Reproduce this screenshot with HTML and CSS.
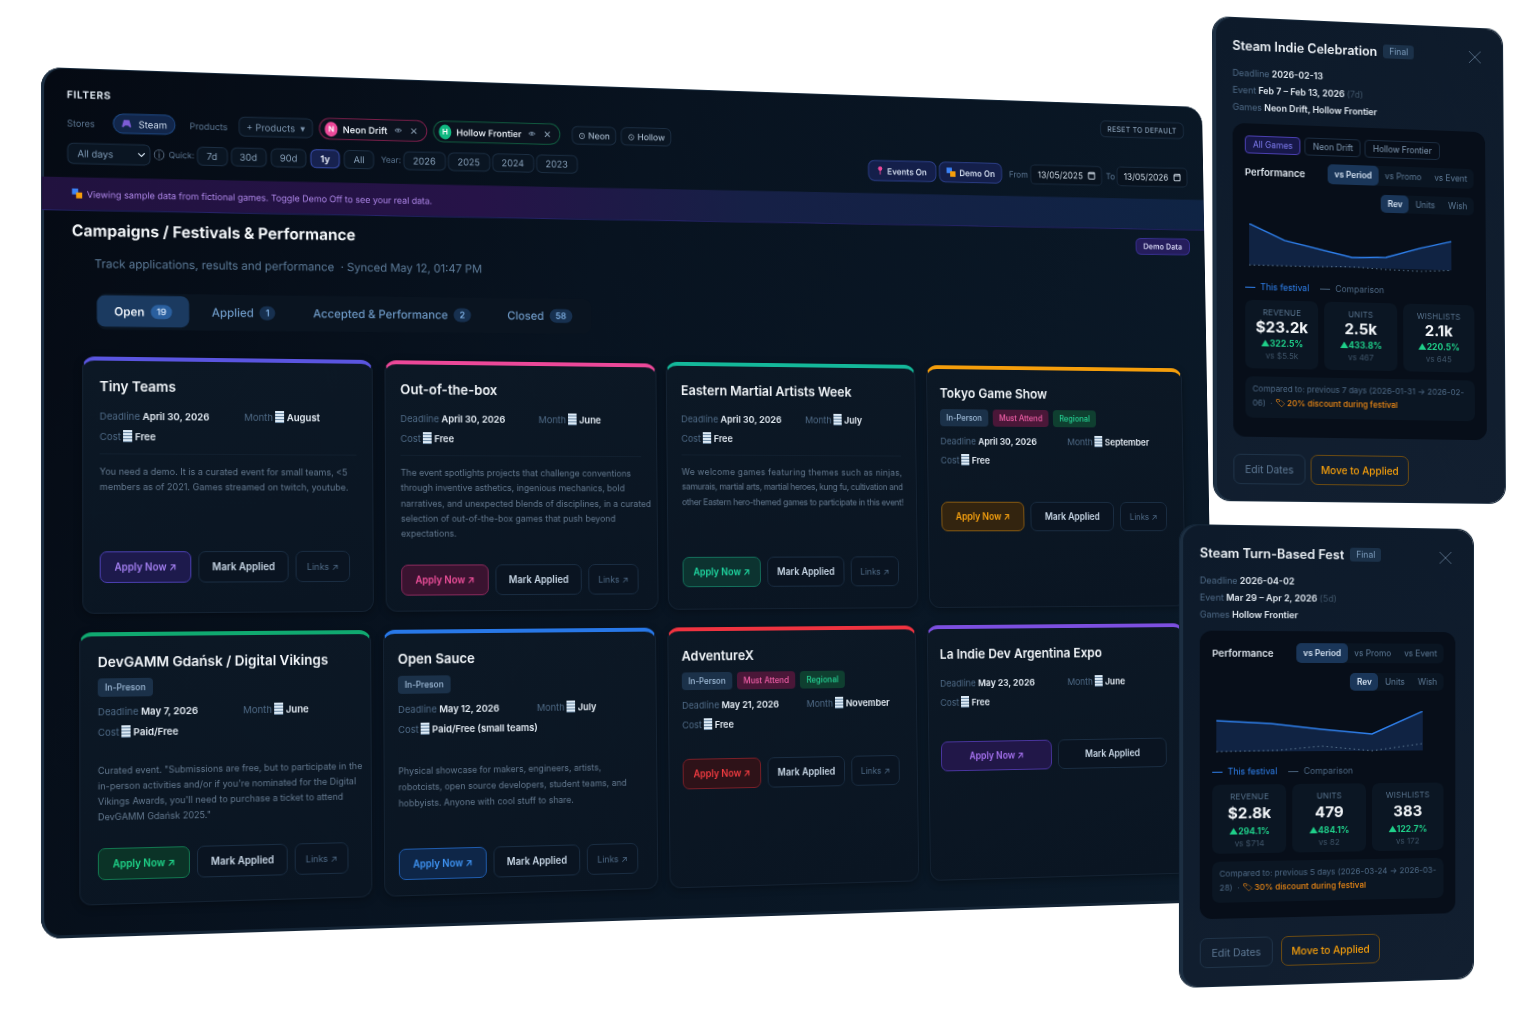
FILE: index.html
```html
<!DOCTYPE html>
<html lang="en">
<head>
<meta charset="utf-8">
<title>Campaigns / Festivals &amp; Performance</title>
<link rel="stylesheet" href="styles.css">
</head>
<body>
<section class="win main-win">
 <div class="top">
  <header class="filters">
    <div class="filters-title"><span>FILTERS</span><span class="chip chip-reset">RESET TO DEFAULT</span></div>
    <div class="frow">
      <span class="flabel w-stores">Stores</span>
      <span class="chip chip-steam"><svg class="ic" viewBox="0 0 12 10"><path d="M3 1h6l2 7-1 1-2.500-2h-3L2 9 1 8z" fill="#7c5cd6"/></svg>Steam</span>
      <span class="flabel w-products">Products</span>
      <span class="chip w-addprod">+ Products &nbsp;▾</span>
      <span class="pill pill-pink"><i class="ava ava-pink">N</i>Neon Drift<svg class="eye" viewBox="0 0 12 8"><path d="M1 4q5-5 10 0q-5 5-10 0z" fill="none" stroke="#8aa0b8"/><circle cx="6" cy="4" r="1.400" fill="#8aa0b8"/></svg><span class="x">✕</span></span>
      <span class="pill pill-green"><i class="ava ava-green">H</i>Hollow Frontier<svg class="eye" viewBox="0 0 12 8"><path d="M1 4q5-5 10 0q-5 5-10 0z" fill="none" stroke="#8aa0b8"/><circle cx="6" cy="4" r="1.400" fill="#8aa0b8"/></svg><span class="x">✕</span></span>
      <span class="chip chip-game">⊙ Neon</span>
      <span class="chip chip-game">⊙ Hollow</span>
    </div>
    <div class="frow frow-2">
      <span class="select">All days<svg class="caret" viewBox="0 0 10 6"><path d="M1 1l4 4 4-4" fill="none" stroke="#c8d6e4" stroke-width="1.500"/></svg></span>
      <span class="info">ⓘ</span>
      <span class="flabel quick">Quick:</span>
      <span class="chip q w-7">7d</span><span class="chip q w-30">30d</span><span class="chip q w-30 w-90">90d</span><span class="chip q chip-on w-1y">1y</span><span class="chip q w-7 w-all">All</span>
      <span class="flabel year">Year:</span>
      <span class="chip q w-yr">2026</span><span class="chip q w-yr">2025</span><span class="chip q w-yr">2024</span><span class="chip q w-yr">2023</span>
      <span class="chip chip-toggle w-ev push"><svg class="ic pin" viewBox="0 0 8 12"><circle cx="4" cy="3.500" r="2.800" fill="#ec4899"/><path d="M4 5v6" stroke="#ec4899" stroke-width="1.200"/></svg>Events On</span>
      <span class="chip chip-toggle"><svg class="ic" viewBox="0 0 10 10"><rect width="6" height="6" fill="#3b82f6"/><rect x="4" y="4" width="6" height="6" fill="#f59e0b"/></svg>Demo On</span>
      <span class="flabel from">From</span>
      <span class="date">13/05/2025<svg class="cal" viewBox="0 0 10 10"><rect x="1.500" y="2" width="7" height="7" rx="1" fill="none" stroke="#d4dfea"/><path d="M1.500 3.500h7" stroke="#d4dfea"/></svg></span>
      <span class="flabel to">To</span>
      <span class="date">13/05/2026<svg class="cal" viewBox="0 0 10 10"><rect x="1.500" y="2" width="7" height="7" rx="1" fill="none" stroke="#d4dfea"/><path d="M1.500 3.500h7" stroke="#d4dfea"/></svg></span>
    </div>
  </header>

  <div class="banner"><svg class="ic" viewBox="0 0 10 10"><rect width="6" height="6" fill="#3b82f6"/><rect x="4" y="4" width="6" height="6" fill="#f59e0b"/></svg>Viewing sample data from fictional games. Toggle Demo Off to see your real data.</div>

  <div class="head">
    <div>
      <h1>Campaigns / Festivals &amp; Performance</h1>
      <p class="sub">Track applications, results and performance &nbsp;· Synced May 12, 01:47 PM</p>
    </div>
    <span class="demo-badge">Demo Data</span>
  </div>

  <nav class="tabs">
    <span class="tab tab-on">Open <b>19</b></span>
    <span class="tab">Applied <b>1</b></span>
    <span class="tab">Accepted &amp; Performance <b>2</b></span>
    <span class="tab">Closed <b>58</b></span>
  </nav>
 </div>

  <div class="grid">
    <article class="card c-indigo sp-a">
      <h2>Tiny Teams</h2>
      <div class="meta"><span><u>Deadline</u> April 30, 2026</span><span><u>Month</u> <i class="bars"></i> August</span><span><u>Cost</u> <i class="bars"></i> Free</span></div>
      <hr>
      <p class="desc">You need a demo. It is a curated event for small teams, &lt;5<br>members as of 2021. Games streamed on twitch, youtube.</p>
      <div class="actions"><span class="btn apply">Apply Now ↗</span><span class="btn mark">Mark Applied</span><span class="btn links">Links ↗</span></div>
    </article>
    <article class="card c-pink sp-b">
      <h2>Out-of-the-box</h2>
      <div class="meta"><span><u>Deadline</u> April 30, 2026</span><span><u>Month</u> <i class="bars"></i> June</span><span><u>Cost</u> <i class="bars"></i> Free</span></div>
      <hr>
      <p class="desc">The event spotlights projects that challenge conventions<br>through inventive asthetics, ingenious mechanics, bold<br>narratives, and unexpected blends of disciplines, in a curated<br>selection of out-of-the-box games that push beyond<br>expectations.</p>
      <div class="actions"><span class="btn apply">Apply Now ↗</span><span class="btn mark">Mark Applied</span><span class="btn links">Links ↗</span></div>
    </article>
    <article class="card c-teal sp-c meta-narrow">
      <h2>Eastern Martial Artists Week</h2>
      <div class="meta"><span><u>Deadline</u> April 30, 2026</span><span><u>Month</u> <i class="bars"></i> July</span><span><u>Cost</u> <i class="bars"></i> Free</span></div>
      <hr>
      <p class="desc"><span class="loose">We welcome games featuring themes such as ninjas,</span><br><span class="tight">samurais, martial arts, martial heroes, kung fu, cultivation and</span><br><span class="tight">other Eastern hero-themed games to participate in this event!</span></p>
      <div class="actions"><span class="btn apply">Apply Now ↗</span><span class="btn mark">Mark Applied</span><span class="btn links">Links ↗</span></div>
    </article>
    <article class="card c-amber sp-d">
      <h2>Tokyo Game Show</h2>
      <div class="tags"><span class="tag t-blue">In-Person</span><span class="tag t-pink">Must Attend</span><span class="tag t-green">Regional</span></div>
      <div class="meta"><span><u>Deadline</u> April 30, 2026</span><span><u>Month</u> <i class="bars"></i> September</span><span><u>Cost</u> <i class="bars"></i> Free</span></div>
      <div class="actions"><span class="btn apply">Apply Now ↗</span><span class="btn mark">Mark Applied</span><span class="btn links">Links ↗</span></div>
    </article>

    <article class="card c-green sp-e">
      <h2>DevGAMM Gdańsk / Digital Vikings</h2>
      <div class="tags"><span class="tag t-blue">In-Preson</span></div>
      <div class="meta"><span><u>Deadline</u> May 7, 2026</span><span><u>Month</u> <i class="bars"></i> June</span><span><u>Cost</u> <i class="bars"></i> Paid/Free</span></div>
      <p class="desc">Curated event. "Submissions are free, but to participate in the<br>in-person activities and/or if you're nominated for the Digital<br>Vikings Awards, you'll need to purchase a ticket to attend<br>DevGAMM Gdańsk 2025."</p>
      <div class="actions"><span class="btn apply">Apply Now ↗</span><span class="btn mark">Mark Applied</span><span class="btn links">Links ↗</span></div>
    </article>
    <article class="card c-blue sp-f">
      <h2>Open Sauce</h2>
      <div class="tags"><span class="tag t-blue">In-Preson</span></div>
      <div class="meta"><span><u>Deadline</u> May 12, 2026</span><span><u>Month</u> <i class="bars"></i> July</span><span><u>Cost</u> <i class="bars"></i> Paid/Free (small teams)</span></div>
      <p class="desc">Physical showcase for makers, engineers, artists,<br>robotcists, open source developers, student teams, and<br>hobbyists. Anyone with cool stuff to share.</p>
      <div class="actions"><span class="btn apply">Apply Now ↗</span><span class="btn mark">Mark Applied</span><span class="btn links">Links ↗</span></div>
    </article>
    <article class="card c-red sp-g meta-narrow">
      <h2>AdventureX</h2>
      <div class="tags"><span class="tag t-blue">In-Person</span><span class="tag t-pink">Must Attend</span><span class="tag t-green">Regional</span></div>
      <div class="meta"><span><u>Deadline</u> May 21, 2026</span><span><u>Month</u> <i class="bars"></i> November</span><span><u>Cost</u> <i class="bars"></i> Free</span></div>
      <div class="actions"><span class="btn apply">Apply Now ↗</span><span class="btn mark">Mark Applied</span><span class="btn links">Links ↗</span></div>
    </article>
    <article class="card c-violet sp-h">
      <h2>La Indie Dev Argentina Expo</h2>
      <div class="meta"><span><u>Deadline</u> May 23, 2026</span><span><u>Month</u> <i class="bars"></i> June</span><span><u>Cost</u> <i class="bars"></i> Free</span></div>
      <div class="actions wide"><span class="btn apply">Apply Now ↗</span><span class="btn mark">Mark Applied</span></div>
    </article>
  </div>
</section>

<aside class="win modal modal-1">
  <div class="m-title"><h3>Steam Indie Celebration</h3><span class="final">Final</span><svg class="close" viewBox="0 0 14 14"><path d="M1 1l12 12M13 1L1 13" stroke="#50667e" fill="none"/></svg></div>
  <div class="m-info"><u>Deadline</u> 2026-02-13</div>
  <div class="m-info"><u>Event</u> Feb 7 – Feb 13, 2026 <s>(7d)</s></div>
  <div class="m-info"><u>Games</u> Neon Drift, Hollow Frontier</div>
  <div class="panel">
    <div class="game-tabs"><span class="gt gt-on">All Games</span><span class="gt">Neon Drift</span><span class="gt">Hollow Frontier</span></div>
    <div class="perf"><b>Performance</b><span class="seg"><em class="on">vs Period</em><em>vs Promo</em><em>vs Event</em></span></div>
    <div class="perf2"><span class="seg seg-sm"><em class="on">Rev</em><em>Units</em><em>Wish</em></span></div>
    <svg class="chart" viewBox="0 0 204 48" preserveAspectRatio="none">
      <path d="M0 0L35 17L102 33L136 32L171 21L202 13V44H0Z" fill="#1c3f78" fill-opacity=".45"/>
      <path d="M0 44L60 44L102 43L136 45L171 46L202 44" fill="none" stroke="#5a7690" stroke-dasharray="1.500 3"/>
      <path d="M0 0L35 17L102 33L136 32L171 21L202 13" fill="none" stroke="#2f80ed" stroke-width="1.500"/>
    </svg>
    <div class="legend"><span class="lg lg-blue">This festival</span><span class="lg">Comparison</span></div>
    <div class="stats">
      <div class="stat"><small>REVENUE</small><strong>$23.2k</strong><span class="up">▲322.5%</span><span class="vs">vs $5.5k</span></div>
      <div class="stat"><small>UNITS</small><strong>2.5k</strong><span class="up">▲433.8%</span><span class="vs">vs 467</span></div>
      <div class="stat"><small>WISHLISTS</small><strong>2.1k</strong><span class="up">▲220.5%</span><span class="vs">vs 645</span></div>
    </div>
    <div class="note">Compared to: previous 7 days (2026-01-31 → 2026-02-<br>06) &nbsp;· <span class="promo">🏷 20% discount during festival</span></div>
  </div>
  <div class="m-actions"><span class="mbtn edit">Edit Dates</span><span class="mbtn move">Move to Applied</span></div>
</aside>

<aside class="win modal modal-2">
  <div class="m-title"><h3>Steam Turn-Based Fest</h3><span class="final">Final</span><svg class="close" viewBox="0 0 14 14"><path d="M1 1l12 12M13 1L1 13" stroke="#50667e" fill="none"/></svg></div>
  <div class="m-info"><u>Deadline</u> 2026-04-02</div>
  <div class="m-info"><u>Event</u> Mar 29 – Apr 2, 2026 <s>(5d)</s></div>
  <div class="m-info"><u>Games</u> Hollow Frontier</div>
  <div class="panel">
    <div class="perf"><b>Performance</b><span class="seg"><em class="on">vs Period</em><em>vs Promo</em><em>vs Event</em></span></div>
    <div class="perf2"><span class="seg seg-sm"><em class="on">Rev</em><em>Units</em><em>Wish</em></span></div>
    <svg class="chart chart-2" viewBox="0 0 204 42" preserveAspectRatio="none">
      <path d="M0 9L53 12L103 18L153 23L204 0V40H0Z" fill="#1c3f78" fill-opacity=".45"/>
      <path d="M0 40L60 39L103 35L153 40L204 33" fill="none" stroke="#5a7690" stroke-dasharray="1.500 3"/>
      <path d="M0 9L53 12L103 18L153 23L204 0" fill="none" stroke="#2f80ed" stroke-width="1.500"/>
    </svg>
    <div class="legend"><span class="lg lg-blue">This festival</span><span class="lg">Comparison</span></div>
    <div class="stats">
      <div class="stat"><small>REVENUE</small><strong>$2.8k</strong><span class="up">▲294.1%</span><span class="vs">vs $714</span></div>
      <div class="stat"><small>UNITS</small><strong>479</strong><span class="up">▲484.1%</span><span class="vs">vs 82</span></div>
      <div class="stat"><small>WISHLISTS</small><strong>383</strong><span class="up">▲122.7%</span><span class="vs">vs 172</span></div>
    </div>
    <div class="note">Compared to: previous 5 days (2026-03-24 → 2026-03-<br>28) &nbsp;· <span class="promo">🏷 30% discount during festival</span></div>
  </div>
  <div class="m-actions"><span class="mbtn edit">Edit Dates</span><span class="mbtn move">Move to Applied</span></div>
</aside>
</body>
</html>
```
FILE: styles.css
```css
* { box-sizing: border-box; }
html, body { margin: 0; height: 100%; }
body {
  width: 1533px; height: 1026px; overflow: hidden; background: #fff;
  font-family: "Inter", "Liberation Sans", sans-serif; color: #dbe5ef; position: relative;
}
u { text-decoration: none; font-weight: 400; color: #4f6a86; }
s { text-decoration: none; font-weight: 400; color: #3f5468; }
i, em { font-style: normal; }

/* windows placed on a free canvas, seen in perspective */
.win { position: absolute; left: 0; top: 0; transform-origin: 0 0; filter: blur(.25px); }
.main-win {
  width: 1240px; height: 850px; border-radius: 20px; overflow: hidden;
  background: linear-gradient(115deg, #050a13 0%, #081320 40%, #0b1a29 100%);
  box-shadow: inset 3px 0 0 #1c2e41, inset 0 1px 0 #16293b, inset 0 -3px 0 #142435;
  transform: matrix3d(1.02959,.040565,0,.00007762, -.00063,1.01145,0,-.000015367, 0,0,1,0, 41,67,0,1);
}
.modal {
  width: 290px; border-radius: 16px; padding: 17px 18px 0 19px;
  background: linear-gradient(160deg, #0d1a2a, #121f30);
  box-shadow: inset 3px 0 0 #1c2e41, 0 0 0 1px #16283a;
}
.modal-1 { height: 480px; transform: matrix3d(1.10629,.04702,0,.00007306, -.015852,.99886,0,-.00001477, 0,0,1,0, 1213,17,0,1); }
.modal-2 { height: 460px; transform: matrix3d(1.16907,.074353,0,.00010776, 0,1.00435,0,0, 0,0,1,0, 1180,525,0,1); }

/* the upper band of the window reads slightly flatter than its edge */
.top { transform: rotate(-.35deg); transform-origin: 0 0; }

/* filters */
.filters { height: 108px; padding: 20px 22px 0 25px; }
.filters-title { display: flex; justify-content: space-between; align-items: flex-start; height: 12px; font-size: 10px; font-weight: 700; letter-spacing: .6px; color: #dfe8f1; line-height: 12px; }
.frow { display: flex; align-items: center; gap: 5px; margin-top: 11px; height: 22px; font-size: 9.500px; }
.frow-2 { margin-top: 8px; gap: 3px; margin-right: -3px; }
.flabel { color: #5f7a96; font-size: 9px; }
.w-stores { width: 40px; }
.w-products { width: 40px; margin-left: 9px; }
.w-addprod { width: 75px; margin-left: 4px; }
.chip {
  display: inline-flex; align-items: center; justify-content: center; height: 20px; padding: 0 7px;
  border: 1px solid #1c2e42; border-radius: 6px; background: #0a1522; color: #7d96b0; font-size: 9.500px; white-space: nowrap;
}
.chip-steam { width: 62px; border-radius: 10px; border-color: #1f4a86; background: #12264a; color: #d5e2f2; gap: 5px; }
.ic { width: 11px; height: 10px; flex: none; margin-right: 1px; }
.pill {
  display: inline-flex; align-items: center; height: 22px; border-radius: 11px; padding: 0 9px 0 5px; gap: 5px;
  font-size: 9.300px; font-weight: 600; color: #e8eef5; white-space: nowrap; background: #0b121e;
}
.pill-pink { width: 111px; border: 1px solid #7a1f4a; margin-left: 1px; }
.pill-green { width: 133px; border: 1px solid #125c40; margin-left: 1px; }
.ava {
  width: 15px; height: 15px; border-radius: 50%; color: #fff; font-size: 8px; font-weight: 700;
  display: inline-flex; align-items: center; justify-content: center;
}
.ava-pink { background: #ec4899; }
.ava-green { background: #10b981; }
.eye { width: 9px; height: 6px; margin-left: 2px; }
.x { color: #8ea2b6; font-size: 10px; font-weight: 400; margin-left: 3px; }
.chip-game { height: 19px; margin-left: 7px; padding: 0 6px; color: #a9bbce; font-size: 9px; font-weight: 500; }
.chip-game + .chip-game { margin-left: 0; }
.chip-reset { width: 97px; height: 18px; padding: 0; margin-top: 5px; font-size: 8px; font-weight: 500; letter-spacing: .3px; color: #8ba2ba; }
.select {
  display: inline-flex; align-items: center; justify-content: space-between; width: 82px; height: 21px; padding: 0 4px 0 9px;
  border: 1px solid #1c2e42; border-radius: 6px; background: #0a1522; color: #84a0bc; font-size: 9.500px;
}
.caret { width: 8px; height: 5px; }
.info { color: #7d96b0; font-size: 11px; margin: 0 1px 0 0; }
.quick { font-size: 8.500px; margin-right: -1px; }
.q { height: 19px; padding: 0; color: #8aa3bc; }
.w-7 { width: 31px; }
.w-30 { width: 36px; }
.w-90 { margin-left: 1.500px; }
.w-1y { width: 30px; margin-left: 1px; }
.w-all { margin-left: 1px; }
.w-yr { width: 44px; margin-right: -1px; }
.chip-on { border-color: #3a4fb0; background: #17224f; color: #e8eef8; font-weight: 700; }
.year { margin-left: 4px; margin-right: -1px; font-size: 8.500px; }
.push { margin-left: auto; }
.chip-toggle { height: 22px; border-color: #2c3f88; background: #141f4a; color: #dbe5f5; font-weight: 600; font-size: 9px; gap: 3px; border-radius: 7px; padding: 0 7px; }
.w-ev { width: 76px; }
.pin { width: 7px; }
.from { margin-left: 5px; }
.date {
  display: inline-flex; align-items: center; justify-content: space-between; width: 82px; height: 21px; padding: 0 6px 0 7px;
  border: 1px solid #1a2b3e; border-radius: 5px; background: #08121e; color: #d9e4ef; font-size: 9.500px;
}
.to { margin: 0 -1px 0 1px; }
.cal { width: 10px; height: 10px; }

/* banner */
.banner {
  height: 33px; margin: 0 -12px 0 0; padding: 0 0 0 29px; display: flex; align-items: center; gap: 3px; font-size: 9px; color: #b48cf0;
  background: linear-gradient(90deg, #21123f 0%, #261348 35%, #162046 58%, #0f2444 100%);
  border-bottom: 1px solid #26246a;
}

/* page head */
.head { display: flex; justify-content: space-between; align-items: flex-start; padding: 0 18px 0 29px; height: 80.500px; }
h1 { margin: 8.500px 0 0; font-size: 15.500px; line-height: 22px; font-weight: 700; color: #f4f7fa; white-space: nowrap; }
.sub { margin: 14px 0 0 22px; font-size: 11.500px; line-height: 15px; color: #5f7e9c; white-space: nowrap; }
.demo-badge {
  margin-top: 9px; width: 63px; height: 18px; border-radius: 6px; border: 1px solid #3a3295; background: #251d5c;
  display: flex; align-items: center; justify-content: center; color: #d8d8f5; font-size: 8.500px; font-weight: 600;
}

/* tabs */
.tabs {
  display: flex; align-items: center; gap: 6px; width: 503px; height: 36px; margin-left: 53px; border-radius: 9px; background: #0a1420;
}
.tab { display: flex; align-items: center; gap: 6px; height: 31px; padding: 0 16px; border-radius: 8px; color: #6f9bc8; font-size: 11.500px; font-weight: 500; white-space: nowrap; }
.tab-on { padding: 0 17px; }
.tab b { height: 14px; padding: 0 6px; border-radius: 7px; background: #17304f; color: #7fb0e4; font-size: 9px; font-weight: 600; display: flex; align-items: center; justify-content: center; }
.tab-on { background: #1b3a60; color: #f0f5fb; font-weight: 600; }
.tab-on b { background: #2a5f9e; color: #d5e6fb; }

/* cards */
.grid {
  display: grid; grid-template-columns: 290px 284px 270px 291px; grid-template-rows: 252px 265px; gap: 18px 12px;
  padding-left: 40px; margin-top: 26.500px;
}
.card {
  --accent: #6366f1; --act-fill: rgba(99,102,241,.16); --act-text: #a78bfa;
  position: relative; padding: 0 16px; border-radius: 12px; border: 1px solid #142232; overflow: hidden;
  background: linear-gradient(170deg, #0c1825, #0a1522);
  border-top: 4px solid var(--accent); box-shadow: 0 2px 8px rgba(0,0,0,.3);
}
.c-indigo { --accent: #5a55e0; --act-fill: #1d1a4c; --act-border: #4a3fb0; --act-text: #a37ff0; }
.c-pink { --accent: #ec4899; --act-fill: #3a1330; --act-border: #8a2a5c; --act-text: #f0509c; padding-left: 15px; }
.c-teal { --accent: #14b89a; --act-fill: #0c3330; --act-border: #14705c; --act-text: #1fd6a0; margin: -2px 0 0 -2px; padding-left: 15px; }
.c-amber { --accent: #f59e0b; --act-fill: #33240f; --act-border: #8a5c12; --act-text: #f5a00f; margin-top: -2px; padding-left: 14px; }
.c-green { --accent: #10a970; --act-fill: #0b3327; --act-border: #12754f; --act-text: #1fd68a; padding-left: 17px; }
.c-blue { --accent: #2878e8; --act-fill: #0e2648; --act-border: #1f5cae; --act-text: #3f94f4; padding-left: 14px; }
.c-red { --accent: #ef3340; --act-fill: #2e1218; --act-border: #7a1f28; --act-text: #ef3b40; padding-left: 14px; }
.c-violet { --accent: #7c4fe0; --act-fill: #211748; --act-border: #4a35a0; --act-text: #a672f0; padding-left: 13px; }
.sp-e, .sp-f, .sp-g, .sp-h { margin-left: -3px; margin-right: 3px; }

h2 { margin: 16px 0 0; font-size: 13.500px; line-height: 18px; font-weight: 600; color: #f2f6fa; white-space: nowrap; }
.tags { display: flex; gap: 5px; margin-top: 8px; }
.tag { display: inline-flex; align-items: center; height: 18px; padding: 0 7px; border-radius: 4px; font-size: 8.500px; font-weight: 500; }
.t-blue { background: #1b3149; color: #a3bfdc; }
.t-pink { background: #4a1738; color: #ee5ea6; }
.t-green { background: #0f3f30; color: #24d092; }
.meta { display: grid; grid-template-columns: 143px auto; row-gap: 4.500px; margin-top: 13px; font-size: 9.600px; font-weight: 600; line-height: 15px; color: #e4ecf4; white-space: nowrap; }
.meta-narrow .meta { grid-template-columns: 134px auto; }
.tags + .meta { margin-top: 8px; }
.bars {
  display: inline-block; width: 9px; height: 12px; vertical-align: -2px;
  background: repeating-linear-gradient(180deg, #dceaf6 0 2px, #6d8aa5 2px 3px);
}
hr { border: 0; border-top: 1px solid #111f2e; margin: 9px 0 0; }
.desc { margin: 9.500px 0 0; font-size: 9px; line-height: 15.300px; color: #64798f; white-space: nowrap; }
.loose { letter-spacing: .3px; }
.tight { letter-spacing: -.33px; }
.actions { display: flex; gap: 7px; }
.btn { display: flex; align-items: center; justify-content: center; height: 31px; border-radius: 7px; border: 1px solid #1a2d42; font-size: 9.700px; font-weight: 600; white-space: nowrap; background: #0a1421; }
.apply { flex: 0 0 90px; background: var(--act-fill); border-color: var(--act-border); color: var(--act-text); }
.mark { flex: 0 0 90px; color: #c9d8e7; }
.links { flex: 0 0 54px; color: #4f6a86; font-weight: 400; font-size: 9px; }
.wide .apply, .wide .mark { flex: 1 1 0; }
.sp-a .actions { margin-top: 55px; }
.sp-a .links { flex-basis: 55px; }
.sp-b .actions { margin-top: 24px; }
.sp-b .links { flex-basis: 53px; }
.sp-c .actions { margin-top: 49px; }
.sp-c .apply, .sp-c .mark { flex-basis: 84px; } .sp-c .links { flex-basis: 53px; }
.sp-d .actions { margin-top: 36px; }
.sp-d .apply { flex-basis: 93px; } .sp-d .mark { flex-basis: 95px; } .sp-d .links { flex-basis: 54px; }
.sp-e .tags { margin-top: 7px; }
.sp-e .meta { margin-top: 7px; }
.sp-e .desc { margin-top: 22px; }
.sp-e .actions { margin-top: 22px; }
.sp-f .desc { margin-top: 26px; line-height: 16px; }
.sp-f .actions { margin-top: 37px; }
.sp-g .actions { margin-top: 27px; }
.sp-h h2 { margin-top: 17px; }
.sp-h .meta { margin-top: 14px; }
.sp-h .actions { margin-top: 33px; margin-right: 5px; }
.sp-g .apply, .sp-g .mark { flex-basis: 84px; } .sp-g .links { flex-basis: 53px; }

/* modal */
.m-title { display: flex; align-items: center; height: 20px; margin-bottom: 9px; position: relative; }
h3 { margin: 0; font-size: 12.500px; font-weight: 600; color: #eef3f8; white-space: nowrap; }
.final { margin-left: 6px; padding: 0 6px; height: 14px; border-radius: 3px; background: #1b3149; color: #7c9cbc; font-size: 8.500px; display: flex; align-items: center; }
.close { position: absolute; right: 3px; top: 5px; width: 14px; height: 14px; }
.m-info { font-size: 8.800px; line-height: 17px; font-weight: 600; color: #e0e8f0; white-space: nowrap; }
.panel { margin-top: 8px; height: 312px; border-radius: 12px; padding: 12px 12px 0; background: #070e19; }
.modal-2 .panel { height: 288px; margin-top: 8px; padding-top: 10px; }
.game-tabs { display: flex; gap: 4px; }
.gt { height: 18px; padding: 0 7px; border: 1px solid #1b2c40; border-radius: 4px; display: flex; align-items: center; color: #8099b2; font-size: 8.300px; white-space: nowrap; }
.gt-on { border-color: #4a3fb0; background: #17184a; color: #7f7cf0; }
.perf { display: flex; align-items: center; justify-content: space-between; margin-top: 8px; }
.modal-2 .perf { margin-top: 2px; }
.perf b { font-size: 9.500px; font-weight: 600; color: #dfe7ef; }
.seg { display: flex; height: 20px; padding: 0; border-radius: 5px; background: #0a1522; }
.seg em { display: flex; align-items: center; padding: 0 6.500px; color: #5e7a96; font-size: 8.300px; border-radius: 5px; white-space: nowrap; }
.seg em.on { background: #1a3659; color: #d2e0f0; font-weight: 600; }
.perf2 { display: flex; justify-content: flex-end; margin-top: 9px; }
.modal-2 .perf2 { margin-top: 10px; }
.seg-sm { height: 18px; }
.chart { display: block; width: 204px; height: 45px; margin: 15px 0 0 4px; }
.chart-2 { height: 42px; margin-top: 21px; }
.legend { display: flex; gap: 11px; margin-top: 13px; font-size: 8.500px; color: #4f6a86; line-height: 11px; }
.lg { display: flex; align-items: center; gap: 5px; }
.lg::before { content: ""; width: 10px; height: 1.500px; background: #47607a; }
.lg-blue { color: #2f80ed; }
.lg-blue::before { background: #2f80ed; }
.stats { display: grid; grid-template-columns: repeat(3, 1fr); gap: 6px; margin-top: 7px; }
.stat { height: 68px; border-radius: 7px; background: #0b1623; display: flex; flex-direction: column; align-items: center; padding-top: 7px; }
.modal-2 .stat { height: 69px; }
.stat small { font-size: 8px; line-height: 10px; color: #56708a; letter-spacing: .1px; }
.stat strong { font-size: 15px; line-height: 20px; font-weight: 700; color: #f3f6f9; }
.modal-2 .stat strong { line-height: 24px; }
.up { font-size: 8.500px; line-height: 13px; font-weight: 700; color: #1fd08a; }
.vs { font-size: 8px; line-height: 10px; color: #3f5468; }
.note { margin-top: 8px; height: 41px; padding: 6px 7px; border-radius: 7px; background: #0b1623; font-size: 8px; line-height: 13.500px; color: #4f6a86; white-space: nowrap; }
.promo { color: #f08a14; font-weight: 500; }
.m-actions { display: flex; gap: 5px; margin-top: 17px; }
.modal-2 .m-actions { gap: 8px; margin-top: 19px; }
.mbtn { height: 30px; border-radius: 7px; display: flex; align-items: center; justify-content: center; font-size: 10px; white-space: nowrap; }
.edit { width: 71px; border: 1px solid #1f3348; color: #5f7a96; }
.move { width: 98px; border: 1px solid #6a4a12; color: #f59e0b; font-weight: 500; }
```
